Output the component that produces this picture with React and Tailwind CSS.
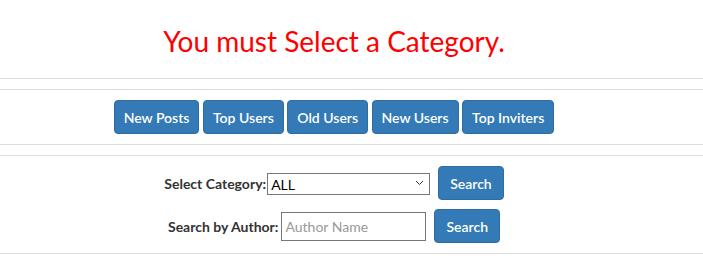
const tabs = ['New Posts', 'Top Users', 'Old Users', 'New Users', 'Top Inviters']

const App = () => {
    return (
        <div className="w-[703px] h-[274px] bg-white font-['Lato',sans-serif] text-[#333]">
            <div className="pr-[35px] pt-[22px] h-[78px] text-center">
                <h1 className="text-[28px] leading-[38px] text-[#ff0000]">You must Select a Category.</h1>
            </div>
            <hr className="border-t border-[#ddd]" />
            <div className="h-[10px]"></div>
            <hr className="border-t border-[#ddd]" />
            <div className="pr-[35px] pt-[10px] h-[54px] flex justify-center gap-[3.5px]">
                {tabs.map((t) => (
                    <button key={t} className="h-[34px] px-[9px] bg-[#337ab7] border border-[#2e6da4] rounded-[4px] text-white text-[14px] font-semibold">
                        {t}
                    </button>
                ))}
            </div>
            <hr className="border-t border-[#ddd]" />
            <div className="h-[10px]"></div>
            <hr className="border-t border-[#ddd]" />
            <div className="pr-[35px] h-[97px] flex flex-col items-center pt-[10px]">
                <div className="flex items-center h-[34px]">
                    <label className="font-bold text-[14px] mr-[1px]">Select Category:</label>
                    <div className="relative w-[163px] h-[22px]">
                        <select className="appearance-none w-full h-full border border-[#767676] bg-white pl-[3px] text-[14px] text-black">
                            <option>ALL</option>
                        </select>
                        <svg className="absolute right-[6px] top-[8px] pointer-events-none" width="9" height="6" viewBox="0 0 9 6">
                            <path d="M1 1l3.5 3.5L8 1" fill="none" stroke="#333" strokeWidth="1" />
                        </svg>
                    </div>
                    <button className="ml-[8px] h-[34px] px-[11px] bg-[#337ab7] border border-[#2e6da4] rounded-[4px] text-white text-[14px] font-semibold">Search</button>
                </div>
                <div className="flex items-center h-[34px] mt-[9px]">
                    <label className="font-bold text-[14px] mr-[3px]">Search by Author:</label>
                    <input className="w-[145px] h-[29px] border border-[#767676] px-[3px] text-[14px] placeholder:text-[#999]" placeholder="Author Name" />
                    <button className="ml-[8px] h-[34px] px-[11px] bg-[#337ab7] border border-[#2e6da4] rounded-[4px] text-white text-[14px] font-semibold">Search</button>
                </div>
            </div>
            <hr className="border-t border-[#ddd]" />
        </div>
    )
}

export default App
